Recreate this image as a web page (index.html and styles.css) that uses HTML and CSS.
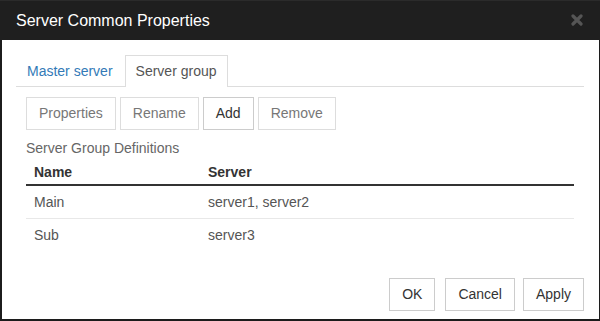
FILE: index.html
```html
<!DOCTYPE html>
<html>
<head>
<meta charset="utf-8">
<link rel="stylesheet" href="styles.css">
</head>
<body>
<div class="dialog">
  <div class="header">
    <span class="title">Server Common Properties</span>
    <svg class="close" width="12" height="12" viewBox="0 0 12 12"><path d="M2 2 L10 10 M10 2 L2 10" stroke="#555" stroke-width="3.2" stroke-linecap="round"/></svg>
  </div>
  <div class="content">
    <div class="tabs">
      <div class="tab">Master server</div>
      <div class="tab active">Server group</div>
    </div>
    <div class="pane">
      <div class="toolbar">
        <button class="btn disabled">Properties</button>
        <button class="btn disabled">Rename</button>
        <button class="btn">Add</button>
        <button class="btn disabled">Remove</button>
      </div>
      <div class="label">Server Group Definitions</div>
      <table class="grid">
        <thead>
          <tr><th class="c1">Name</th><th>Server</th></tr>
        </thead>
        <tbody>
          <tr><td>Main</td><td>server1, server2</td></tr>
          <tr><td>Sub</td><td>server3</td></tr>
        </tbody>
      </table>
    </div>
    <div class="footer">
      <button class="btn ok">OK</button>
      <button class="btn">Cancel</button>
      <button class="btn">Apply</button>
    </div>
  </div>
</div>
</body>
</html>
```
FILE: styles.css
```css
html, body {
  margin: 0;
  padding: 0;
}
body {
  width: 600px;
  height: 321px;
  overflow: hidden;
  background: #1c1c1c;
  font-family: "Liberation Sans", Arial, sans-serif;
  font-size: 14px;
  color: #333;
}
.dialog {
  height: 321px;
  display: flex;
  flex-direction: column;
}
.header {
  height: 40px;
  box-sizing: border-box;
  background: #1f1f1f;
  border-top: 1px solid #2b2b2b;
  display: flex;
  align-items: center;
  padding: 0 17px 0 16px;
  color: #fff;
}
.title {
  font-size: 16px;
}
.close {
  margin-left: auto;
  margin-top: -1px;
}
.content {
  flex: 1;
  background: #fff;
  margin: 0 1px 2px 2px;
  padding: 15px 15px 0 14px;
  display: flex;
  flex-direction: column;
}
.tabs {
  display: flex;
  border-bottom: 1px solid #ddd;
}
.tab {
  line-height: 30px;
  padding: 0 10px 1px;
  margin-right: 1px;
  margin-bottom: -1px;
  border: 1px solid transparent;
  border-bottom: 0;
  color: #337ab7;
}
.tab.active {
  color: #555;
  background: #fff;
  border-color: #ddd;
}
.pane {
  padding: 10px 10px 0;
}
.toolbar {
  display: flex;
  gap: 4px;
}
.btn {
  font-family: inherit;
  font-size: 14px;
  line-height: 31px;
  height: 33px;
  padding: 0 12px;
  border: 1px solid #ccc;
  background: #fff;
  color: #333;
  margin: 0;
  border-radius: 0;
}
.btn.disabled {
  color: #777;
  border-color: #ddd;
}
.label {
  margin-top: 9px;
  line-height: 18px;
  color: #666;
}
.grid {
  margin-top: 4px;
  width: 100%;
  border-collapse: collapse;
}
.grid th {
  text-align: left;
  font-weight: bold;
  line-height: 23px;
  padding: 0 8px;
  border-bottom: 2px solid #333;
  color: #333;
}
.grid th.c1 {
  width: 158px;
}
.grid td {
  line-height: 32px;
  padding: 0 8px;
  color: #555;
}
.grid tbody tr + tr td {
  border-top: 1px solid #e8e8e8;
}
.footer {
  margin-top: auto;
  display: flex;
  justify-content: flex-end;
  gap: 8px;
  padding-bottom: 8px;
}
.footer .ok {
  margin-right: 2px;
}
```
